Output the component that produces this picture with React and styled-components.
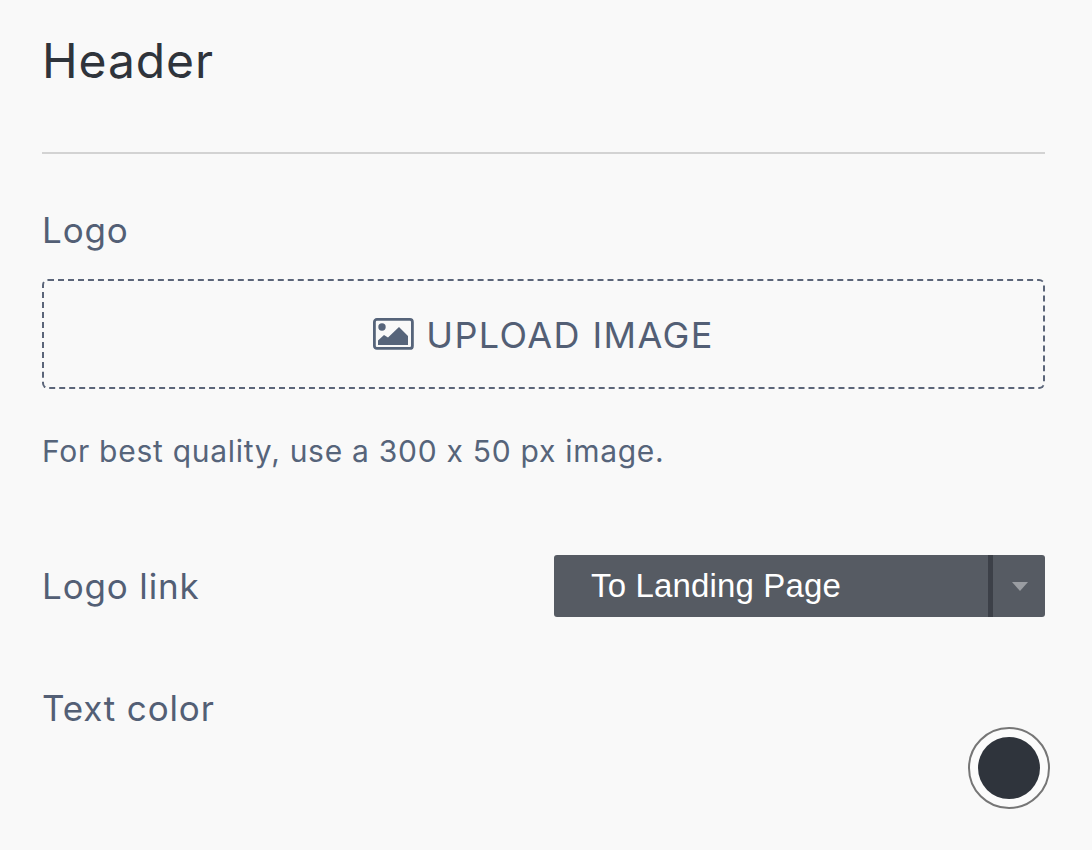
import React from "react";
import styled, { createGlobalStyle } from "styled-components";

const Global = createGlobalStyle`
  html, body { margin: 0; padding: 0; background: #f9f9f9; }
  body {
    font-family: "Inter", "Liberation Sans", sans-serif;
    font-feature-settings: "calt" 0;
  }
`;

const Page = styled.div`
  width: 1092px;
  height: 850px;
  box-sizing: border-box;
  padding: 31px 47px 0 42px;
  overflow: hidden;
  background: #f9f9f9;
`;

const Title = styled.h1`
  margin: 0;
  height: 60px;
  font-size: 48px;
  line-height: 60px;
  font-weight: 400;
  letter-spacing: 0.9px;
  color: #2f343b;
`;

const Divider = styled.hr`
  margin: 61px 0 0;
  border: 0;
  height: 2px;
  background: #d3d3d3;
`;

const Label = styled.div`
  font-size: 35px;
  line-height: 46px;
  font-weight: 400;
  letter-spacing: 0.85px;
  color: #535f75;
`;

const LogoLabel = styled(Label)`
  margin-top: 53px;
`;

const Upload = styled.button`
  display: flex;
  align-items: center;
  justify-content: center;
  gap: 12px;
  width: 100%;
  height: 110px;
  margin-top: 26px;
  padding: 0;
  box-sizing: border-box;
  background: transparent;
  border: 2px dashed #5b6579;
  border-radius: 6px;
  font-family: inherit;
  font-feature-settings: inherit;
  font-size: 36px;
  font-weight: 400;
  letter-spacing: 1.4px;
  color: #535f75;
`;

const UploadText = styled.span`
  padding-top: 2px;
`;

const Hint = styled.p`
  margin: 42px 0 0;
  font-size: 30px;
  line-height: 40px;
  font-weight: 400;
  letter-spacing: 0.72px;
  color: #56647a;
`;

const Row = styled.div`
  display: flex;
  align-items: center;
  justify-content: space-between;
  margin-top: 84px;
`;

const Select = styled.div`
  display: flex;
  align-items: stretch;
  width: 491px;
  height: 62px;
  border-radius: 3px;
  overflow: hidden;
  background: #565b63;
`;

const SelectValue = styled.div`
  flex: 1;
  display: flex;
  align-items: center;
  padding-left: 37px;
  font-family: "Liberation Sans", Arial, sans-serif;
  font-size: 33px;
  letter-spacing: 0.15px;
  color: #ffffff;
  border-right: 5px solid #3c4048;
`;

const Caret = styled.div`
  width: 52px;
  display: flex;
  align-items: center;
  justify-content: center;
  &::after {
    content: "";
    width: 0;
    height: 0;
    margin: 1px 0 0 2px;
    border-left: 8px solid transparent;
    border-right: 8px solid transparent;
    border-top: 9px solid #9a9da2;
  }
`;

const ColorLabel = styled(Label)`
  margin-top: 68px;
`;

const SwatchRow = styled.div`
  display: flex;
  justify-content: flex-end;
  margin: -4px -5px 0 0;
`;

const Swatch = styled.div`
  width: 82px;
  height: 82px;
  box-sizing: border-box;
  padding: 8px;
  border: 2px solid #767676;
  border-radius: 50%;
  background: #fbfbfb;
  &::after {
    content: "";
    display: block;
    width: 100%;
    height: 100%;
    border-radius: 50%;
    background: #2f343c;
  }
`;

const ImageIcon = () => (
  <svg width="41" height="32" viewBox="0 0 41 32" aria-hidden="true">
    <rect x="1.4" y="1.4" width="38" height="29" rx="2.5" fill="none" stroke="#56647a" strokeWidth="2.8" />
    <circle cx="9" cy="9" r="3.7" fill="#56647a" />
    <path d="M5 27V22.5L11 17L15 19.5L26 9L35 18V27Z" fill="#56647a" />
  </svg>
);

export default function App() {
  return (
    <Page>
      <Global />
      <Title>Header</Title>
      <Divider />
      <LogoLabel>Logo</LogoLabel>
      <Upload>
        <ImageIcon />
        <UploadText>UPLOAD IMAGE</UploadText>
      </Upload>
      <Hint>For best quality, use a 300 x 50 px image.</Hint>
      <Row>
        <Label>Logo link</Label>
        <Select>
          <SelectValue>To Landing Page</SelectValue>
          <Caret />
        </Select>
      </Row>
      <ColorLabel>Text color</ColorLabel>
      <SwatchRow>
        <Swatch />
      </SwatchRow>
    </Page>
  );
}
